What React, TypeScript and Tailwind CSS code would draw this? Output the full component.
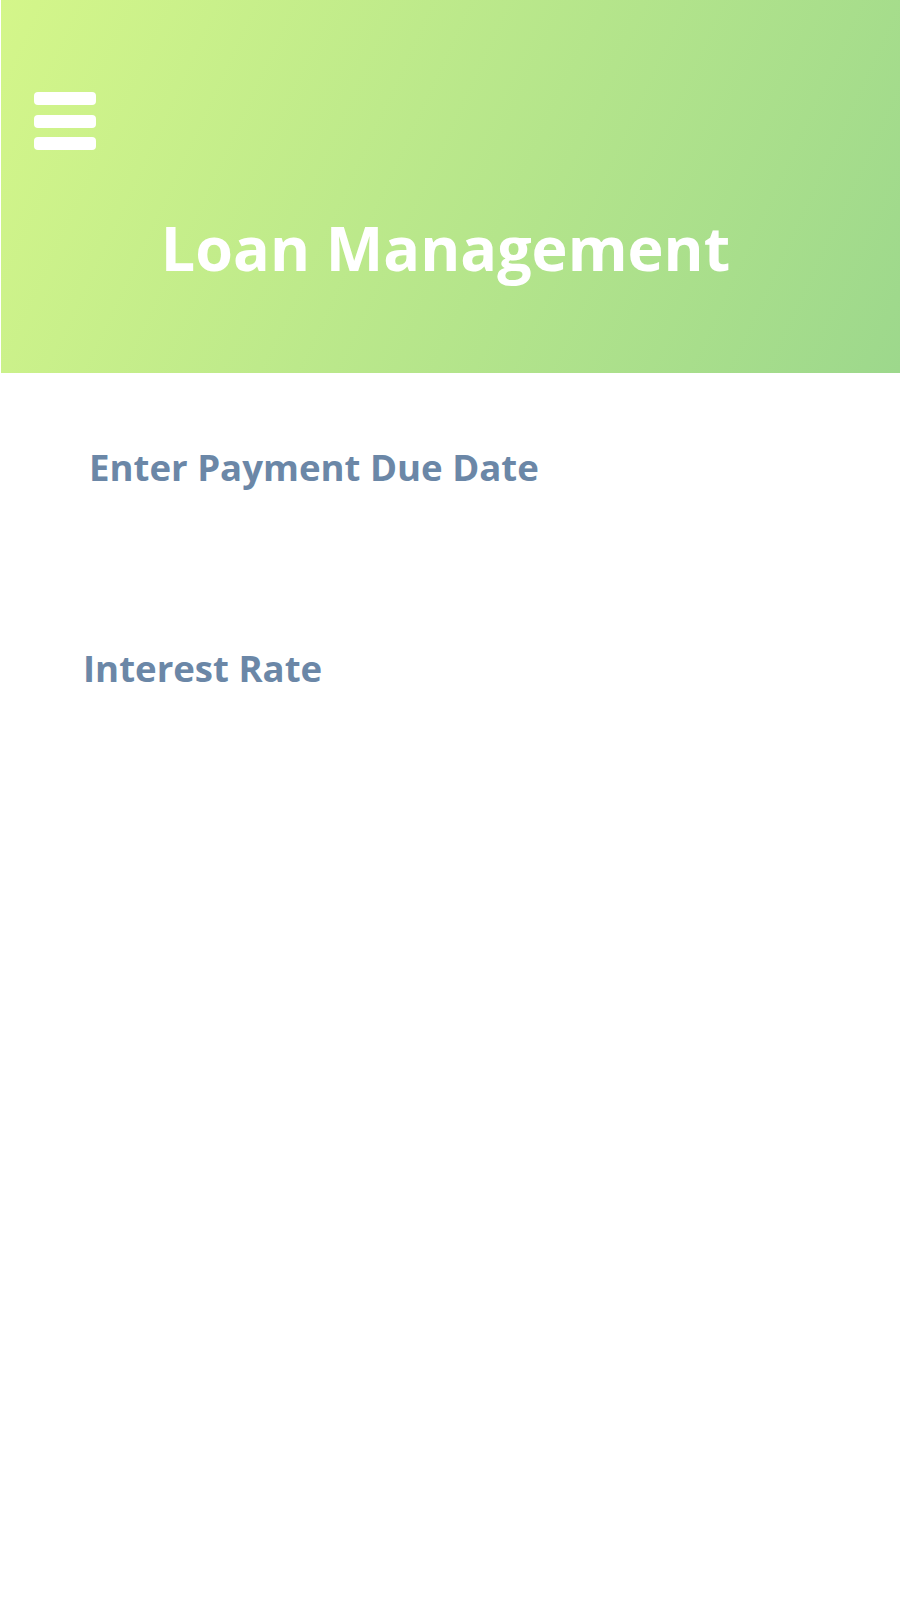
import React from "react";

export default function App() {
  return (
    <div className="min-h-[1600px] w-[900px] bg-white" style={{ fontFamily: '"Open Sans", "Liberation Sans", sans-serif' }}>
      <header className="ml-px h-[373px] bg-[linear-gradient(115deg,#d4f68a_0%,#9dd88c_100%)] flex flex-col">
        <div className="pl-[33px] pt-[92px] flex flex-col gap-[9.5px]">
          <div className="w-[62px] h-[13px] rounded-[4px] bg-white" />
          <div className="w-[62px] h-[13px] rounded-[4px] bg-white" />
          <div className="w-[62px] h-[13px] rounded-[4px] bg-white" />
        </div>
        <h1 className="mt-[67px] text-center text-[61px] leading-none font-bold text-white pr-[10px]">
          Loan Management
        </h1>
      </header>
      <div className="mt-[76px] pl-[89px] text-[36.6px] leading-none font-bold text-[#6b87a7]">
        Enter Payment Due Date
      </div>
      <div className="mt-[164px] pl-[83px] text-[36.6px] leading-none font-bold text-[#6b87a7]">
        Interest Rate
      </div>
    </div>
  );
}
